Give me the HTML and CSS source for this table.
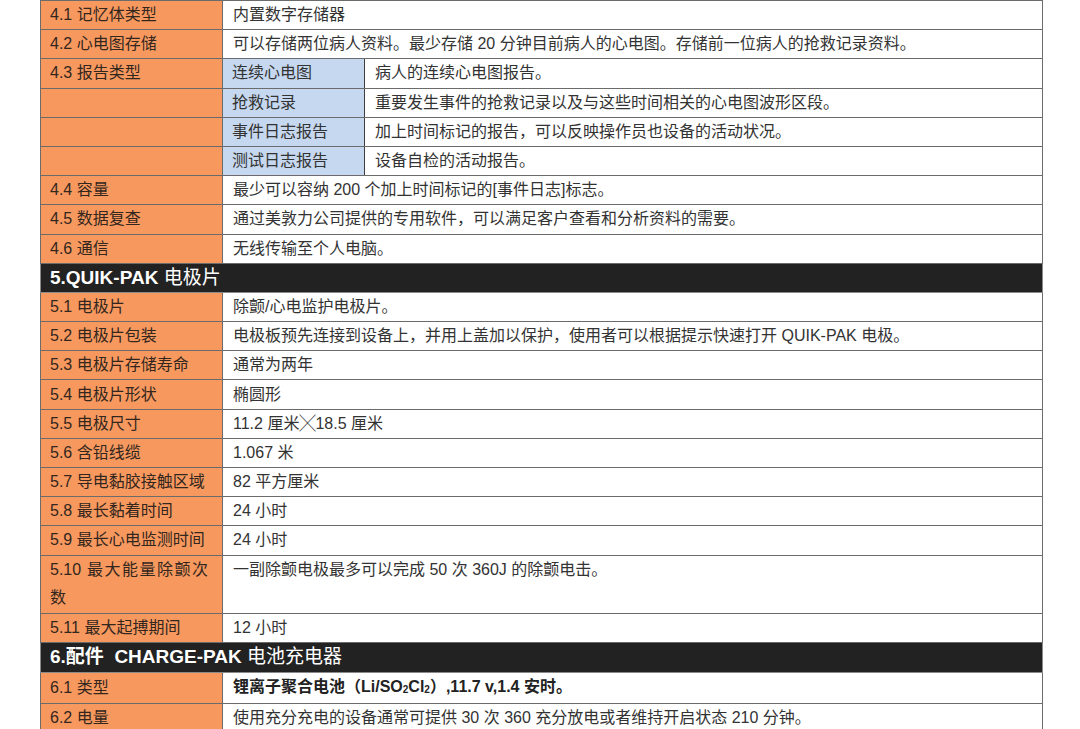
FILE: index.html
```html
<!DOCTYPE html>
<html lang="zh-CN">
<head>
<meta charset="utf-8">
<title>规格</title>
<link rel="stylesheet" href="styles.css">
</head>
<body>
<table class="spec">
  <colgroup>
    <col class="c-label">
    <col class="c-sub">
    <col class="c-rest">
  </colgroup>
  <tbody>
    <tr><td class="lab">4.1 记忆体类型</td><td class="val" colspan="2">内置数字存储器</td></tr>
    <tr><td class="lab">4.2 心电图存储</td><td class="val" colspan="2">可以存储两位病人资料。最少存储 20 分钟目前病人的心电图。存储前一位病人的抢救记录资料。</td></tr>
    <tr><td class="lab">4.3 报告类型</td><td class="sub">连续心电图</td><td class="val">病人的连续心电图报告。</td></tr>
    <tr><td class="lab"></td><td class="sub">抢救记录</td><td class="val">重要发生事件的抢救记录以及与这些时间相关的心电图波形区段。</td></tr>
    <tr><td class="lab"></td><td class="sub">事件日志报告</td><td class="val">加上时间标记的报告，可以反映操作员也设备的活动状况。</td></tr>
    <tr><td class="lab"></td><td class="sub">测试日志报告</td><td class="val">设备自检的活动报告。</td></tr>
    <tr><td class="lab">4.4 容量</td><td class="val" colspan="2">最少可以容纳 200 个加上时间标记的[事件日志]标志。</td></tr>
    <tr><td class="lab">4.5 数据复查</td><td class="val" colspan="2">通过美敦力公司提供的专用软件，可以满足客户查看和分析资料的需要。</td></tr>
    <tr><td class="lab">4.6 通信</td><td class="val" colspan="2">无线传输至个人电脑。</td></tr>
    <tr class="head"><td colspan="3"><b>5.QUIK-PAK</b> 电极片</td></tr>
    <tr><td class="lab">5.1 电极片</td><td class="val" colspan="2">除颤/心电监护电极片。</td></tr>
    <tr><td class="lab">5.2 电极片包装</td><td class="val" colspan="2">电极板预先连接到设备上，并用上盖加以保护，使用者可以根据提示快速打开 QUIK-PAK 电极。</td></tr>
    <tr><td class="lab">5.3 电极片存储寿命</td><td class="val" colspan="2">通常为两年</td></tr>
    <tr><td class="lab">5.4 电极片形状</td><td class="val" colspan="2">椭圆形</td></tr>
    <tr><td class="lab">5.5 电极尺寸</td><td class="val" colspan="2">11.2 厘米╳18.5 厘米</td></tr>
    <tr><td class="lab">5.6 含铅线缆</td><td class="val" colspan="2">1.067 米</td></tr>
    <tr><td class="lab">5.7 导电黏胶接触区域</td><td class="val" colspan="2">82 平方厘米</td></tr>
    <tr><td class="lab">5.8 最长黏着时间</td><td class="val" colspan="2">24 小时</td></tr>
    <tr><td class="lab">5.9 最长心电监测时间</td><td class="val" colspan="2">24 小时</td></tr>
    <tr class="tall"><td class="lab wrap">5.10 最大能量除颤次数</td><td class="val" colspan="2">一副除颤电极最多可以完成 50 次 360J 的除颤电击。</td></tr>
    <tr><td class="lab">5.11 最大起搏期间</td><td class="val" colspan="2">12 小时</td></tr>
    <tr class="head"><td colspan="3"><b>6.配件 &nbsp;CHARGE-PAK</b> 电池充电器</td></tr>
    <tr><td class="lab">6.1 类型</td><td class="val strong" colspan="2">锂离子聚合电池（Li/SO<sub>2</sub>Cl<sub>2</sub>）,11.7 v,1.4 安时。</td></tr>
    <tr><td class="lab">6.2 电量</td><td class="val" colspan="2">使用充分充电的设备通常可提供 30 次 360 充分放电或者维持开启状态 210 分钟。</td></tr>
  </tbody>
</table>
</body>
</html>
```
FILE: styles.css
```css
html, body {
  margin: 0;
  padding: 0;
  background: #ffffff;
}

body {
  font-family: "Liberation Sans", "Noto Sans CJK SC", sans-serif;
  font-size: 16px;
  color: #333333;
}

.spec {
  margin-left: 40px;
  width: 1003px;
  border-collapse: collapse;
  table-layout: fixed;
}

.c-label { width: 182px; }
.c-sub { width: 142px; }

.spec td {
  border: 1px solid #6b6b6b;
  height: 28.2px;
  padding: 0 9px;
  line-height: 28px;
  vertical-align: middle;
  white-space: nowrap;
  overflow: hidden;
}

.spec .lab {
  background: #f7995f;
  color: #33261d;
}

.spec .sub {
  background: #c6d8ef;
  border-right: 1px solid #3e3e3e;
}

.spec .val {
  background: #ffffff;
  padding-left: 10px;
}

.spec .strong {
  font-weight: bold;
  color: #222222;
}

.spec sub {
  font-size: 10px;
  vertical-align: baseline;
  position: relative;
  top: 1px;
}

.spec .tall td {
  height: 57.6px;
  vertical-align: top;
}

.spec .wrap {
  white-space: normal;
  word-break: break-all;
  text-align: justify;
  text-align-last: left;
  padding-right: 14px;
}

.spec .head td {
  background: #222222;
  color: #ffffff;
  font-size: 19px;
  padding-left: 9px;
  border-color: #8a8a8a;
}

.spec .head b {
  font-weight: bold;
}
```
